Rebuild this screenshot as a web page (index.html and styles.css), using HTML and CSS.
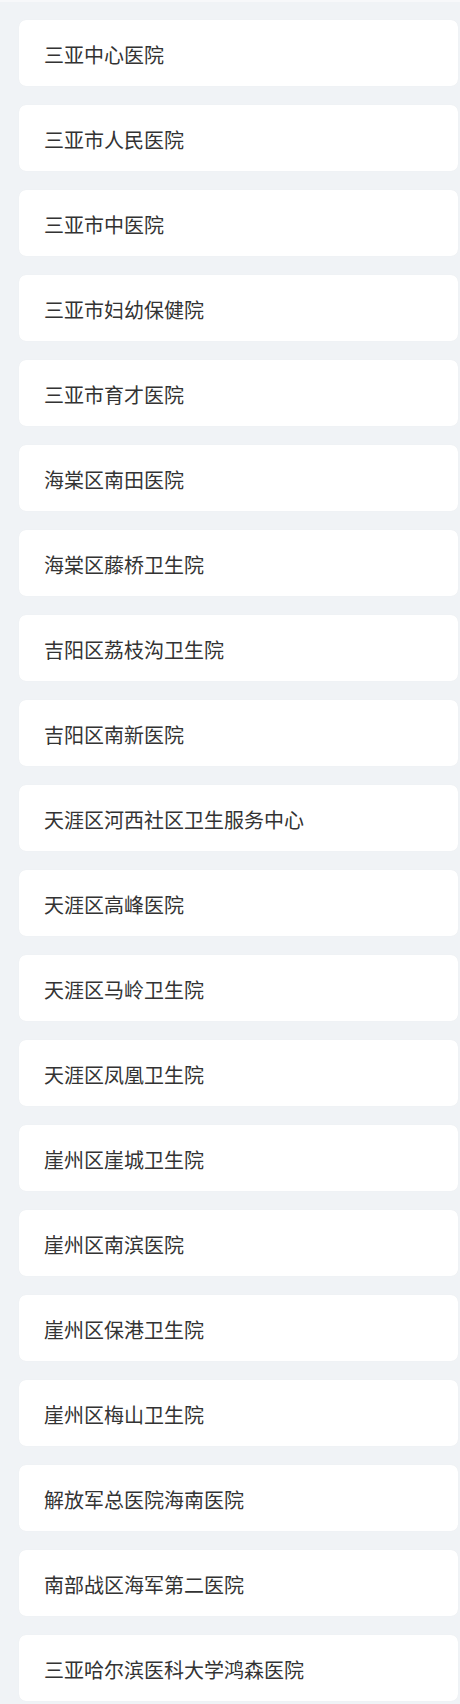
FILE: index.html
```html
<!DOCTYPE html>
<html lang="zh-CN">
<head>
<meta charset="utf-8">
<title>医院列表</title>
<link rel="stylesheet" href="styles.css">
</head>
<body>
<div class="topline"></div>
<ul class="list">
  <li class="card">三亚中心医院</li>
  <li class="card">三亚市人民医院</li>
  <li class="card">三亚市中医院</li>
  <li class="card">三亚市妇幼保健院</li>
  <li class="card">三亚市育才医院</li>
  <li class="card">海棠区南田医院</li>
  <li class="card">海棠区藤桥卫生院</li>
  <li class="card">吉阳区荔枝沟卫生院</li>
  <li class="card">吉阳区南新医院</li>
  <li class="card">天涯区河西社区卫生服务中心</li>
  <li class="card">天涯区高峰医院</li>
  <li class="card">天涯区马岭卫生院</li>
  <li class="card">天涯区凤凰卫生院</li>
  <li class="card">崖州区崖城卫生院</li>
  <li class="card">崖州区南滨医院</li>
  <li class="card">崖州区保港卫生院</li>
  <li class="card">崖州区梅山卫生院</li>
  <li class="card">解放军总医院海南医院</li>
  <li class="card">南部战区海军第二医院</li>
  <li class="card">三亚哈尔滨医科大学鸿森医院</li>
</ul>
</body>
</html>
```
FILE: styles.css
```css
html, body {
  margin: 0;
  padding: 0;
  background: #f0f3f6;
}
body {
  font-family: "Noto Sans CJK SC", "Noto Sans", sans-serif;
  color: #333;
}
.topline {
  height: 2px;
  background: #f7f8fa;
}
.list {
  list-style: none;
  margin: 0;
  padding: 18px 2px 3px 19px;
  display: flex;
  flex-direction: column;
  gap: 19px;
}
.card {
  height: 66px;
  background: #fff;
  border-radius: 7px;
  box-shadow: 0 0 1px rgba(0, 0, 0, 0.06);
  display: flex;
  align-items: center;
  padding-left: 25px;
  padding-top: 3px;
  box-sizing: border-box;
  font-size: 20px;
  line-height: 1;
}
```
